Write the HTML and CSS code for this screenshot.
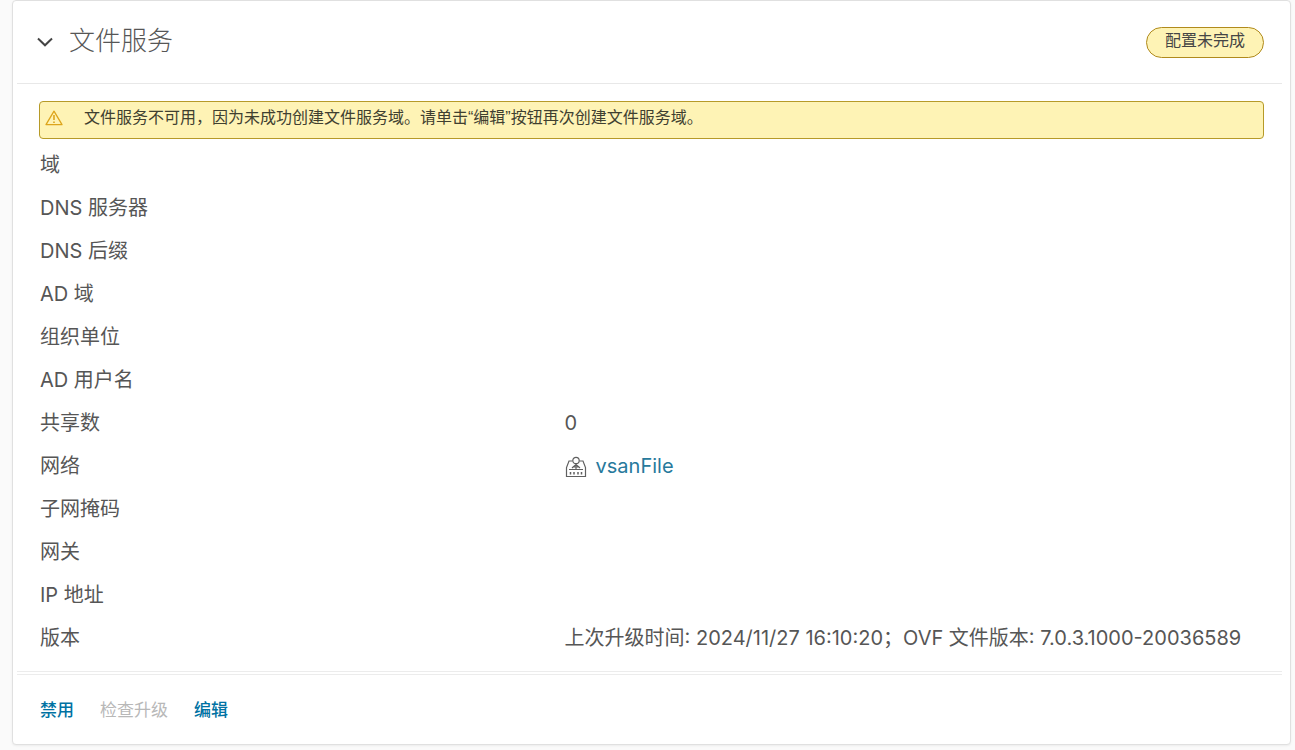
FILE: index.html
```html
<!DOCTYPE html>
<html lang="zh-CN">
<head>
<meta charset="utf-8">
<title>文件服务</title>
<link rel="stylesheet" href="styles.css">
</head>
<body>
<section class="card">
  <header class="card-header">
    <button class="toggle" type="button" aria-label="折叠" aria-expanded="true">
      <svg width="16" height="10" viewBox="0 0 16 10" fill="none" stroke="#454545" stroke-width="2"><path d="M1 1.5 8 8.3 15 1.5"/></svg>
    </button>
    <h1 class="title">文件服务</h1>
    <span class="badge">配置未完成</span>
  </header>
  <div class="card-body">
    <div class="alert" role="alert">
      <svg class="alert-icon" width="18" height="16" viewBox="0 0 18 16" fill="none" stroke="#dda51c" stroke-width="1.3" stroke-linejoin="round"><path d="M9 1.2 17 14.6H1Z"/><path d="M9 5v5M9 11.4v1.6" stroke-width="1.6"/></svg>
      <span>文件服务不可用，因为未成功创建文件服务域。请单击“编辑”按钮再次创建文件服务域。</span>
    </div>
    <dl class="details">
      <div class="row"><dt>域</dt><dd></dd></div>
      <div class="row"><dt>DNS 服务器</dt><dd></dd></div>
      <div class="row"><dt>DNS 后缀</dt><dd></dd></div>
      <div class="row"><dt>AD 域</dt><dd></dd></div>
      <div class="row"><dt>组织单位</dt><dd></dd></div>
      <div class="row"><dt>AD 用户名</dt><dd></dd></div>
      <div class="row"><dt>共享数</dt><dd>0</dd></div>
      <div class="row"><dt>网络</dt><dd class="network">
        <svg width="22" height="24" viewBox="0 0 22 24" fill="none" stroke="#606060" stroke-width="1.2"><path d="M7.500 7H4L1.500 13.500V22.500H20.500V13.500L18 7H14.500"/><circle cx="11" cy="6.500" r="3.200"/><path d="M11 9.700V15M4 15.500H18M7 14 11 10.500 15 14M7.500 13H14.500"/><path d="M5.500 18v2.500M9 18v2.500M13 18v2.500M16.500 18v2.500" stroke-width="1.500"/></svg>
        <a href="#network">vsanFile</a></dd></div>
      <div class="row"><dt>子网掩码</dt><dd></dd></div>
      <div class="row"><dt>网关</dt><dd></dd></div>
      <div class="row"><dt>IP 地址</dt><dd></dd></div>
      <div class="row"><dt>版本</dt><dd>上次升级时间: 2024/11/27 16:10:20；OVF 文件版本: 7.0.3.1000-20036589</dd></div>
    </dl>
  </div>
  <footer class="card-footer">
    <button class="action" type="button">禁用</button>
    <button class="action" type="button" disabled>检查升级</button>
    <button class="action" type="button">编辑</button>
  </footer>
</section>
</body>
</html>
```
FILE: styles.css
```css
* { box-sizing: border-box; }

body {
  margin: 0;
  padding: 0 4px 5px 12px;
  background: #fafafa;
  color: #565656;
  font: 20px/24px Inter, "Noto Sans CJK SC", sans-serif;
}

.card {
  padding: 0 8px 0 4px;
  background: #fff;
  border: 1px solid #e0e0e0;
  border-radius: 4px;
  box-shadow: 0 1px 2px #ececec;
}

.card-header {
  display: flex;
  align-items: center;
  height: 83px;
  padding: 0 18px 0 20px;
  border-bottom: 1px solid #e8e8e8;
}

.toggle {
  display: flex;
  padding: 0;
  border: 0;
  background: none;
}

.title {
  flex: 1;
  margin: 0 0 6px 16px;
  font: 300 26px/32px "Noto Sans CJK SC", sans-serif;
  color: #565656;
}

.badge {
  padding: 0 18px 4px;
  border: 1px solid #b08a1c;
  border-radius: 16px;
  background: #fef3b5;
  color: #454545;
  font-size: 16px;
  line-height: 25px;
}

.card-body { padding: 17px 18px 12px 22px; }

.alert {
  display: flex;
  align-items: center;
  gap: 21px;
  min-height: 38px;
  padding: 0 5px 4px;
  border: 1px solid #b69a28;
  border-radius: 4px;
  background: #fef3b5;
  color: #404030;
  font: 16px/24px "Liberation Sans", "Noto Sans CJK SC", sans-serif;
}

.alert-icon { flex: none; }

.details { margin: 4px 0 0; }

.row {
  display: grid;
  grid-template-columns: 3fr 4fr;
  align-items: center;
  min-height: 43px;
  padding-left: 1px;
}

.row dd {
  margin: 0;
  white-space: nowrap;
}

.network {
  display: flex;
  align-items: center;
  gap: 9px;
}

.network a {
  color: #27799c;
  text-decoration: none;
}

.card-footer {
  display: flex;
  align-items: center;
  gap: 26px;
  height: 73px;
  padding: 0 23px 2px;
  border-top: 4px double #ececec;
}

.action {
  padding: 0;
  border: 0;
  background: none;
  color: #0072a3;
  font: 500 17px/24px "Noto Sans CJK SC", sans-serif;
}

.action:disabled {
  color: #b8b8b8;
  font-weight: 400;
}
```
